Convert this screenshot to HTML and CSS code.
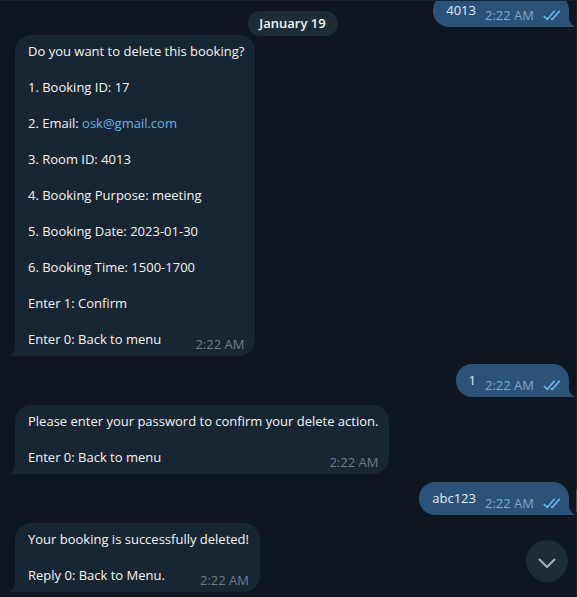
FILE: index.html
```html
<!DOCTYPE html>
<html lang="en">
<head>
<meta charset="utf-8">
<meta name="viewport" content="width=device-width, initial-scale=1">
<title>Booking chat</title>
<link rel="stylesheet" href="styles.css">
</head>
<body>
<svg class="defs" aria-hidden="true">
  <symbol id="tail" viewBox="0 0 8 14"><path d="M0 14H7.5C3.5 12.5 1 9 1 4V0H0Z"/></symbol>
  <symbol id="checks" viewBox="0 0 18 12"><path d="M.8 7 4.2 10.3 11.6 1.8M8 9.4 9.2 10.3 16.8 1.8"/></symbol>
</svg>
<main class="chat">
  <time class="date" datetime="2023-01-19">January 19</time>

  <article class="message out">
    <p>4013</p><time>2:22 AM</time>
    <svg class="checks" aria-hidden="true"><use href="#checks"/></svg>
    <svg class="tail" aria-hidden="true"><use href="#tail"/></svg>
  </article>

  <article class="message in">
    <p>Do you want to delete this booking?</p>
    <p>1. Booking ID: 17</p>
    <p>2. Email: <a href="mailto:osk@gmail.com">osk@gmail.com</a></p>
    <p>3. Room ID: 4013</p>
    <p>4. Booking Purpose: meeting</p>
    <p>5. Booking Date: 2023-01-30</p>
    <p>6. Booking Time: 1500-1700</p>
    <p>Enter 1: Confirm</p>
    <div class="last"><p>Enter 0: Back to menu</p><time>2:22 AM</time></div>
    <svg class="tail" aria-hidden="true"><use href="#tail"/></svg>
  </article>

  <article class="message out">
    <p>1</p><time>2:22 AM</time>
    <svg class="checks" aria-hidden="true"><use href="#checks"/></svg>
    <svg class="tail" aria-hidden="true"><use href="#tail"/></svg>
  </article>

  <article class="message in">
    <p>Please enter your password to confirm your delete action.</p>
    <div class="last"><p>Enter 0: Back to menu</p><time>2:22 AM</time></div>
    <svg class="tail" aria-hidden="true"><use href="#tail"/></svg>
  </article>

  <article class="message out">
    <p>abc123</p><time>2:22 AM</time>
    <svg class="checks" aria-hidden="true"><use href="#checks"/></svg>
    <svg class="tail" aria-hidden="true"><use href="#tail"/></svg>
  </article>

  <article class="message in">
    <p>Your booking is successfully deleted!</p>
    <div class="last"><p>Reply 0: Back to Menu.</p><time>2:22 AM</time></div>
    <svg class="tail" aria-hidden="true"><use href="#tail"/></svg>
  </article>

  <button class="jump" type="button" aria-label="Scroll to bottom">
    <svg viewBox="0 0 20 12" aria-hidden="true"><path d="M2 2 10 10 18 2"/></svg>
  </button>
  <div class="track"><div class="thumb"></div></div>
</main>
</body>
</html>
```
FILE: styles.css
```css
* {
  box-sizing: border-box;
}

body {
  margin: 0;
  background: #0e1621;
  color: #f5f5f5;
  font: 13px/18px "Open Sans", sans-serif;
}

p {
  margin: 0;
}

a {
  color: #6ab3e6;
  text-decoration: none;
}

.defs {
  position: absolute;
  width: 0;
  height: 0;
}

.chat {
  position: relative;
  display: flex;
  flex-direction: column;
  justify-content: flex-end;
  gap: 8px;
  height: 100vh;
  padding: 0 8px 5px 15px;
  overflow: hidden;
  border-top: 1px solid #18222d;
}

.date {
  position: absolute;
  z-index: 1;
  top: 10px;
  left: 50%;
  transform: translateX(-50%);
  margin-left: 4px;
  padding: 3px 12px 4px;
  border-radius: 13px;
  background: #1e2c3a;
  font-weight: 600;
}

.message {
  position: relative;
  flex: none;
  padding: 7px 11px 8px 13px;
  border-radius: 16px;
}

.in {
  align-self: flex-start;
  background: #182533;
  color: #f5f5f5;
  border-bottom-left-radius: 0;
}

.in > p {
  margin-bottom: 18px;
}

.last {
  display: flex;
  justify-content: space-between;
  gap: 24px;
}

.message time {
  color: #6d7f8f;
}

.in time {
  margin: 5px 0 -5px;
}

.out {
  display: flex;
  align-self: flex-end;
  padding-right: 8px;
  background: #2b5278;
  color: #e4ecf2;
  border-bottom-right-radius: 0;
}

.message.out time {
  margin: 5px 9px -5px 9px;
  color: #7da8d3;
}

.checks {
  width: 18px;
  height: 12px;
  margin: 8px 0 -2px;
  fill: none;
  stroke: #6fb9f0;
  stroke-width: 1.6;
}

.tail {
  position: absolute;
  bottom: 0;
  width: 8px;
  height: 14px;
}

.out .tail {
  left: calc(100% - 1px);
  fill: #2b5278;
}

.in .tail {
  right: calc(100% - 1px);
  transform: scaleX(-1);
  fill: #182533;
}

.jump {
  position: absolute;
  right: 9px;
  bottom: 15px;
  display: grid;
  place-items: center;
  width: 42px;
  height: 42px;
  padding: 4px 0 0;
  border: 0;
  border-radius: 50%;
  background: #1e2c3a;
}

.jump svg {
  width: 20px;
  height: 12px;
  fill: none;
  stroke: #a9b3bc;
  stroke-width: 2;
}

.track {
  position: absolute;
  top: 0;
  right: 0;
  bottom: 0;
  display: flex;
  flex-direction: column;
  justify-content: flex-end;
  width: 1px;
  padding-bottom: 85px;
  background: #18212c;
}

.thumb {
  height: 23px;
  background: #465059;
}
```
